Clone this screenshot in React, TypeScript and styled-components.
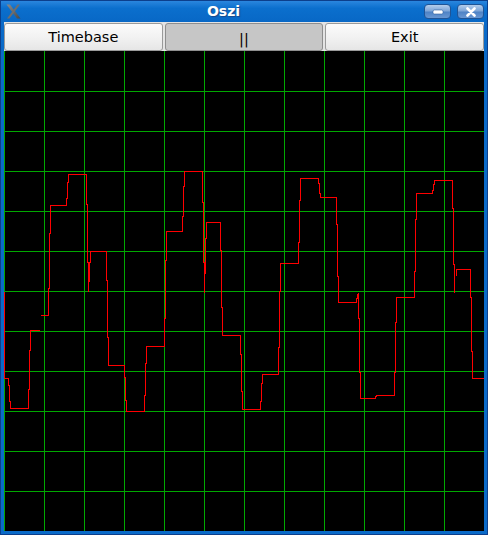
import React from "react";
import styled, { createGlobalStyle } from "styled-components";

const Global = createGlobalStyle`
  html, body { margin: 0; padding: 0; background: #ffffff; }
  * { box-sizing: border-box; }
`;

const Window = styled.div`
  width: 488px;
  height: 535px;
  display: flex;
  flex-direction: column;
  background: #0a6ac8;
  border: 1px solid #0c3f8c;
  padding: 0 3px 3px 3px;
  font-family: "DejaVu Sans", "Liberation Sans", sans-serif;
`;

const TitleBar = styled.div`
  height: 21px;
  margin: 0 -3px;
  display: flex;
  align-items: center;
  background: linear-gradient(#2a86de 0%, #0b6fcd 35%, #0868c6 100%);
`;

const IconSlot = styled.div`
  width: 22px;
  height: 21px;
  display: flex;
  align-items: center;
  justify-content: center;
  padding-left: 2px;
`;

const Title = styled.div`
  flex: 1;
  text-align: center;
  color: #ffffff;
  font-weight: bold;
  font-size: 14px;
  line-height: 21px;
  text-shadow: 1px 1px 1px #1b4a8a;
`;

const WinButtons = styled.div`
  display: flex;
  gap: 6px;
  padding-right: 3px;
`;

const WinButton = styled.div`
  width: 27px;
  height: 15px;
  border-radius: 4px;
  border: 1px solid #1f5496;
  background: linear-gradient(#b4cdeb 0%, #7ea6d8 45%, #4f83c6 55%, #6a98d2 100%);
  display: flex;
  align-items: center;
  justify-content: center;
`;

const Content = styled.div`
  flex: 1;
  display: flex;
  flex-direction: column;
  background: #e4e4e4;
`;

const ButtonRow = styled.div`
  display: grid;
  grid-template-columns: 1fr 1fr 1fr;
  gap: 2px;
  height: 29px;
  padding-top: 1px;
`;

const PushButton = styled.div<{ $down?: boolean }>`
  border: 1px solid ${(p) => (p.$down ? "#8e8e8e" : "#9a9a9a")};
  border-radius: 3px;
  background: ${(p) =>
    p.$down ? "#c6c6c6" : "linear-gradient(#fbfbfb 0%, #f2f2f2 50%, #e6e6e6 100%)"};
  display: flex;
  align-items: center;
  justify-content: center;
  font-size: 14.5px;
  color: #000000;
  padding-top: ${(p) => (p.$down ? "3px" : "0")};
`;

const Scope = styled.svg`
  display: block;
  width: 480px;
  height: 480px;
  background: #000000;
`;

type Pt = [number, number];

const trace: Pt[][] = [
  [
    [4, 291], [4, 378], [8, 378], [8, 385], [9, 385], [9, 401], [10, 401], [10, 408],
    [28, 408], [28, 389], [29, 389], [29, 350], [30, 350], [30, 330], [39, 330],
  ],
  [
    [40, 315], [48, 315], [48, 288], [49, 288], [49, 233], [50, 233], [50, 205],
    [66, 205], [66, 198], [67, 198], [67, 182], [68, 182], [68, 174], [86, 174],
    [86, 204], [87, 204], [87, 262], [88, 262], [88, 291],
  ],
  [
    [89, 281], [89, 262], [90, 262], [90, 251], [106, 251], [106, 280], [107, 280],
    [107, 337], [108, 337], [108, 365], [124, 365], [124, 377], [125, 377], [125, 400],
    [126, 400], [126, 411], [144, 411], [144, 395], [145, 395], [145, 363], [146, 363],
    [146, 346], [164, 346], [164, 318], [165, 318], [165, 260], [166, 260], [166, 231],
    [182, 231], [182, 216], [183, 216], [183, 186], [184, 186], [184, 171], [202, 171],
    [202, 202], [203, 202], [203, 262], [204, 262], [204, 292],
  ],
  [
    [205, 273], [205, 238], [206, 238], [206, 222], [220, 222], [220, 250], [221, 250],
    [221, 307], [222, 307], [222, 335], [240, 335], [240, 354], [241, 354], [241, 391],
    [242, 391], [242, 409], [260, 409], [260, 401], [261, 401], [261, 383], [262, 383],
    [262, 374], [278, 374], [278, 347], [279, 347], [279, 291], [280, 291], [280, 263],
    [298, 263], [298, 242], [299, 242], [299, 200], [300, 200], [300, 178], [318, 178],
    [318, 183], [319, 183], [319, 193], [320, 193], [320, 197], [336, 197], [336, 224],
    [337, 224], [337, 276], [338, 276], [338, 302], [356, 302], [356, 298], [357, 298],
    [357, 293],
  ],
  [
    [358, 292], [358, 318], [359, 318], [359, 372], [360, 372], [360, 398], [375, 398],
    [375, 396], [376, 396], [376, 395], [394, 395], [394, 372], [395, 372], [395, 322],
    [396, 322], [396, 297], [414, 297], [414, 271], [415, 271], [415, 219], [416, 219],
    [416, 193], [432, 193], [432, 190], [433, 190], [433, 184], [434, 184], [434, 180],
    [452, 180], [452, 208], [453, 208], [453, 264], [454, 264], [454, 292],
  ],
  [
    [455, 275], [456, 275], [456, 269], [470, 269], [470, 297], [471, 297], [471, 351],
    [472, 351], [472, 378], [483, 378],
  ],
];

const tracePath = trace
  .map((seg) => seg.map(([x, y], i) => `${i === 0 ? "M" : "L"}${x + 0.5} ${y + 0.5}`).join(" "))
  .join(" ");

const gridPath = (() => {
  const parts: string[] = [];
  for (let i = 0; i < 12; i++) {
    const x = 4 + i * 40 + 0.5;
    parts.push(`M${x} 51 L${x} 531`);
  }
  for (let j = 1; j < 12; j++) {
    const y = 51 + j * 40 + 0.5;
    parts.push(`M4 ${y} L484 ${y}`);
  }
  return parts.join(" ");
})();

const XLogo = () => (
  <svg width="15" height="15" viewBox="0 0 15 15">
    <defs>
      <linearGradient id="xg" x1="0" y1="0" x2="1" y2="1">
        <stop offset="0" stopColor="#8a8a8a" />
        <stop offset="1" stopColor="#4a4a4a" />
      </linearGradient>
    </defs>
    <polygon points="0.5,0.5 4,0.5 14.5,14.5 11,14.5" fill="url(#xg)" />
    <polygon points="11.5,0.5 14,0.5 3.5,14.5 1,14.5" fill="#6e6e6e" />
  </svg>
);

const MinIcon = () => (
  <svg width="12" height="6" viewBox="0 0 12 6">
    <rect x="1" y="1" width="10" height="4" rx="1.5" fill="#ffffff" stroke="#2f5f9e" strokeWidth="0.6" />
  </svg>
);

const CloseIcon = () => (
  <svg width="12" height="10" viewBox="0 0 12 10">
    <path d="M2.5 1.5 L9.5 8.5 M9.5 1.5 L2.5 8.5" stroke="#ffffff" strokeWidth="2.6" strokeLinecap="round" />
  </svg>
);

export default function App() {
  return (
    <>
      <Global />
      <Window>
        <TitleBar>
          <IconSlot>
            <XLogo />
          </IconSlot>
          <Title>Oszi</Title>
          <WinButtons>
            <WinButton>
              <MinIcon />
            </WinButton>
            <WinButton>
              <CloseIcon />
            </WinButton>
          </WinButtons>
        </TitleBar>
        <Content>
          <ButtonRow>
            <PushButton>Timebase</PushButton>
            <PushButton $down>||</PushButton>
            <PushButton>Exit</PushButton>
          </ButtonRow>
          <Scope viewBox="4 51 480 480">
            <path d={gridPath} stroke="#00a800" strokeWidth="1" fill="none" shapeRendering="crispEdges" />
            <path d={tracePath} stroke="#ff0000" strokeWidth="1" fill="none" shapeRendering="crispEdges" />
          </Scope>
        </Content>
      </Window>
    </>
  );
}
